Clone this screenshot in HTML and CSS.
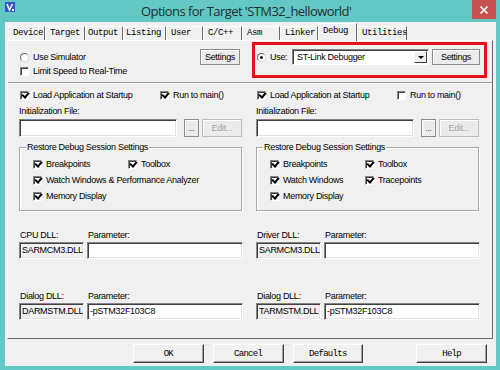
FILE: index.html
```html
<!DOCTYPE html>
<html lang="en">
<head>
    <meta charset="UTF-8">
    <title>Options for Target 'STM32_helloworld'</title>
    <link rel="stylesheet" href="styles.css">
</head>
<body>

<div class="window">
    <div class="titlebar">
        <svg class="app-icon" width="10" height="10" viewBox="0 0 10 10">
            <rect width="10" height="10" fill="#3556c6"/>
            <path d="M2 2 L4.5 8 L7.5 2" stroke="#fff" stroke-width="1.5" fill="none"/>
            <rect x="7" y="7" width="2" height="2" fill="#fff"/>
        </svg>
        <span class="title">Options for Target 'STM32_helloworld'</span>
        <span class="close">
            <svg width="10" height="10" viewBox="0 0 10 10">
                <path d="M1.5 1.5 L8.5 8.5 M8.5 1.5 L1.5 8.5" stroke="#fff" stroke-width="1.7"/>
            </svg>
        </span>
    </div>

    <div class="client">
        <div class="tabs">
            <span class="tab w37">Device</span>
            <span class="tab w40">Target</span>
            <span class="tab w38 tight">Output</span>
            <span class="tab w43 tight">Listing</span>
            <span class="tab w37">User</span>
            <span class="tab w39">C/C++</span>
            <span class="tab w38">Asm</span>
            <span class="tab w38">Linker</span>
            <span class="tab w39 active">Debug</span>
            <span class="tab w50">Utilities</span>
        </div>

        <div class="panel">
            <!-- simulator side -->
            <div class="pane left">
                <div class="top">
                    <div class="row first">
                        <label class="opt"><span class="radio"></span>Use Simulator</label>
                        <button class="btn settings-sim">Settings</button>
                    </div>
                    <div class="row">
                        <label class="opt"><span class="check"></span>Limit Speed to Real-Time</label>
                    </div>
                </div>
                <div class="sep"></div>

                <div class="row load">
                    <label class="opt wide"><span class="check on"></span>Load Application at Startup</label>
                    <label class="opt"><span class="check on"></span>Run to main()</label>
                </div>
                <div class="caption">Initialization File:</div>
                <div class="file-row">
                    <div class="field file"></div>
                    <button class="btn dots">...</button>
                    <button class="btn edit" disabled>Edit...</button>
                </div>

                <div class="group">
                    <span class="legend">Restore Debug Session Settings</span>
                    <div class="group-rows">
                        <div class="grow">
                            <label class="opt col"><span class="check on"></span>Breakpoints</label>
                            <label class="opt"><span class="check on"></span>Toolbox</label>
                        </div>
                        <div class="grow">
                            <label class="opt"><span class="check on"></span>Watch Windows &amp; Performance Analyzer</label>
                        </div>
                        <div class="grow">
                            <label class="opt"><span class="check on"></span>Memory Display</label>
                        </div>
                    </div>
                </div>

                <div class="dll-labels first-dll">
                    <span class="dll-name">CPU DLL:</span>
                    <span>Parameter:</span>
                </div>
                <div class="dll-fields">
                    <div class="field ro dll">SARMCM3.DLL</div>
                    <div class="field param"></div>
                </div>

                <div class="dll-labels second-dll">
                    <span class="dll-name">Dialog DLL:</span>
                    <span>Parameter:</span>
                </div>
                <div class="dll-fields">
                    <div class="field ro dll">DARMSTM.DLL</div>
                    <div class="field param">-pSTM32F103C8</div>
                </div>
            </div>

            <!-- target side -->
            <div class="pane right">
                <div class="top">
                    <div class="highlight">
                        <div class="row first">
                            <label class="opt use"><span class="radio on"></span>Use:</label>
                            <div class="select">
                                <span class="select-text">ST-Link Debugger</span>
                                <span class="drop"><span class="arrow"></span></span>
                            </div>
                            <button class="btn settings-use">Settings</button>
                        </div>
                    </div>
                </div>
                <div class="sep"></div>

                <div class="row load">
                    <label class="opt wide"><span class="check on"></span>Load Application at Startup</label>
                    <label class="opt"><span class="check"></span>Run to main()</label>
                </div>
                <div class="caption">Initialization File:</div>
                <div class="file-row">
                    <div class="field file"></div>
                    <button class="btn dots">...</button>
                    <button class="btn edit" disabled>Edit...</button>
                </div>

                <div class="group">
                    <span class="legend">Restore Debug Session Settings</span>
                    <div class="group-rows">
                        <div class="grow">
                            <label class="opt col"><span class="check on"></span>Breakpoints</label>
                            <label class="opt"><span class="check on"></span>Toolbox</label>
                        </div>
                        <div class="grow">
                            <label class="opt col"><span class="check on"></span>Watch Windows</label>
                            <label class="opt"><span class="check on"></span>Tracepoints</label>
                        </div>
                        <div class="grow">
                            <label class="opt"><span class="check on"></span>Memory Display</label>
                        </div>
                    </div>
                </div>

                <div class="dll-labels first-dll">
                    <span class="dll-name">Driver DLL:</span>
                    <span>Parameter:</span>
                </div>
                <div class="dll-fields">
                    <div class="field ro dll">SARMCM3.DLL</div>
                    <div class="field param"></div>
                </div>

                <div class="dll-labels second-dll">
                    <span class="dll-name">Dialog DLL:</span>
                    <span>Parameter:</span>
                </div>
                <div class="dll-fields">
                    <div class="field ro dll">TARMSTM.DLL</div>
                    <div class="field param">-pSTM32F103C8</div>
                </div>
            </div>
        </div>

        <div class="buttons">
            <button class="dlg-btn">OK</button>
            <button class="dlg-btn">Cancel</button>
            <button class="dlg-btn">Defaults</button>
            <button class="dlg-btn help">Help</button>
        </div>
    </div>
</div>

</body>
</html>
```

FILE: styles.css
```css
* {
    margin: 0;
    padding: 0;
    box-sizing: border-box;
}

body {
    font-family: "Liberation Sans", Arial, sans-serif;
    font-size: 9px;
    letter-spacing: -0.3px;
    color: #000;
    background: #fff;
}

.window {
    width: 500px;
    height: 370px;
    background: #63c7c4;
    display: flex;
    flex-direction: column;
}

/* title bar */
.titlebar {
    height: 22px;
    display: flex;
    align-items: flex-start;
    flex-shrink: 0;
}

.app-icon {
    display: block;
    margin: 2px 0 0 5px;
}

.title {
    margin: 3px 0 0 126px;
    font-family: "Open Sans", "Liberation Sans", sans-serif;
    font-size: 13px;
    letter-spacing: -0.55px;
    line-height: 16px;
    color: #1c3030;
    white-space: nowrap;
}

.close {
    margin-left: auto;
    margin-right: 4px;
    width: 24px;
    height: 19px;
    background: #c75050;
    display: flex;
    align-items: center;
    justify-content: center;
}

/* client area */
.client {
    margin: 0 4px 0 5px;
    height: 344px;
    background: #f0f0f0;
    padding: 4px 0 0 2px;
}

.tabs {
    display: flex;
    align-items: flex-end;
    height: 14px;
    margin-left: 1px;
    font-family: "Liberation Mono", "Courier New", monospace;
    font-size: 9px;
    letter-spacing: -0.4px;
}

.tab {
    height: 14px;
    line-height: 13px;
    padding-left: 4px;
    border-left: 1px solid #fff;
    border-top: 1px solid #fff;
    border-right: 1px solid #6a6a6a;
    white-space: nowrap;
}

.tab.tight { padding-left: 2px; }
.tab.active {
    height: 18px;
    line-height: 15px;
    margin-bottom: -1px;
    background: #f0f0f0;
    position: relative;
    z-index: 1;
}

.w37 { width: 37px; }
.w38 { width: 38px; }
.w39 { width: 39px; }
.w40 { width: 40px; }
.w43 { width: 43px; }
.w50 { width: 50px; }

.panel {
    width: 486px;
    height: 299px;
    border: 1px solid;
    border-color: #fff #696969 #696969 #fff;
    display: flex;
}

.pane {
    display: flex;
    flex-direction: column;
}

.pane.left {
    width: 240px;
    padding-left: 11px;
}

.pane.right {
    width: 244px;
    padding-left: 8px;
}

.top {
    height: 41px;
}

.row {
    display: flex;
    align-items: center;
    height: 12px;
}

.row.first {
    height: 16px;
    margin-top: 8px;
}

.sep {
    height: 2px;
    border-top: 1px solid #a0a0a0;
    border-bottom: 1px solid #fff;
}

.left .sep { margin-left: -11px; }
.right .sep { margin-left: -8px; }

.opt {
    display: flex;
    align-items: center;
    white-space: nowrap;
    line-height: 12px;
}

.opt.wide { width: 140px; }
.opt.col { width: 95px; }
.opt.use { width: 36px; }

.check {
    width: 9px;
    height: 9px;
    margin: 0 4px 0 1px;
    background: #fff;
    border: 1px solid;
    border-color: #808080 #fff #fff #808080;
    box-shadow: inset 1px 1px #404040;
    display: flex;
    align-items: center;
    justify-content: center;
}

.check.on::after {
    content: "";
    width: 3px;
    height: 5px;
    margin: -2px 0 0 1px;
    border: solid #000;
    border-width: 0 2px 2px 0;
    transform: rotate(40deg);
}

.radio {
    width: 9px;
    height: 9px;
    margin: 0 4px 0 1px;
    border-radius: 50%;
    background: #fff;
    border: 1px solid;
    border-color: #6a6a6a #d8d8d8 #d8d8d8 #6a6a6a;
    display: flex;
    align-items: center;
    justify-content: center;
}

.radio.on::after {
    content: "";
    width: 3px;
    height: 3px;
    border-radius: 50%;
    background: #000;
}

.btn {
    font-family: inherit;
    font-size: 9px;
    letter-spacing: -0.3px;
    color: #000;
    height: 16px;
    line-height: 14px;
    background: #ebebeb;
    border: 1px solid #8c8c8c;
    box-shadow: inset 1px 1px #fff;
    text-align: center;
}

.settings-sim {
    width: 40px;
    margin-left: auto;
    margin-right: 8px;
}

.settings-use {
    width: 48px;
    margin-left: 3px;
}

.highlight {
    width: 235px;
    height: 36px;
    margin: 1px 0 0 -4px;
    border: 3px solid #e2131b;
    padding-left: 1px;
}

.highlight .row.first {
    margin-top: 4px;
}

.select {
    width: 137px;
    height: 16px;
    display: flex;
    background: #fff;
    border: 1px solid;
    border-color: #848484 #fff #fff #848484;
    box-shadow: inset 1px 1px #404040;
    padding: 1px 1px 1px 4px;
}

.select-text {
    flex: 1;
    line-height: 13px;
}

.drop {
    width: 13px;
    background: #ececec;
    border: 1px solid;
    border-color: #fff #404040 #404040 #fff;
    display: flex;
    align-items: center;
    justify-content: center;
}

.arrow {
    width: 0;
    height: 0;
    border-left: 3px solid transparent;
    border-right: 3px solid transparent;
    border-top: 3px solid #000;
}

.load {
    margin-top: 5px;
}

.caption {
    margin-top: 4px;
    height: 12px;
    line-height: 12px;
}

.file-row {
    display: flex;
    margin-top: 2px;
    height: 18px;
}

.field {
    height: 17px;
    line-height: 15px;
    padding-left: 2px;
    background: #fff;
    border: 1px solid;
    border-color: #848484 #fff #fff #848484;
    box-shadow: inset 1px 1px #404040, inset -1px -1px #e3e3e3;
    white-space: nowrap;
    overflow: hidden;
}

.field.ro { background: #f0f0f0; }
.field.file { width: 158px; height: 18px; }

.dots {
    width: 15px;
    height: 18px;
    margin-left: 7px;
    color: #555;
}

.edit {
    width: 40px;
    height: 18px;
    margin-left: 3px;
    color: #a4a4a4;
    border-color: #bdbdbd;
}

.group {
    width: 223px;
    height: 64px;
    margin-top: 10px;
    border: 1px solid #a9a9a9;
    box-shadow: inset 1px 1px #fff, 1px 1px #fff;
    padding-left: 12px;
    display: flex;
    flex-direction: column;
}

.legend {
    align-self: flex-start;
    margin: -7px 0 0 -6px;
    padding: 0 1px;
    line-height: 12px;
    background: #f0f0f0;
}

.group-rows {
    margin-top: 3px;
}

.grow {
    display: flex;
    align-items: center;
    height: 16px;
}

.dll-labels {
    display: flex;
    height: 12px;
    line-height: 12px;
}

.first-dll { margin-top: 18px; }
.second-dll { margin-top: 31px; }

.dll-name {
    width: 69px;
    padding-left: 1px;
}

.dll-fields {
    display: flex;
    margin-top: 1px;
}

.dll { width: 65px; }
.param { width: 156px; margin-left: 3px; }

.buttons {
    display: flex;
    margin: 5px 0 0 126px;
}

.dlg-btn {
    width: 72px;
    height: 19px;
    margin-right: 9px;
    font-family: "Liberation Mono", "Courier New", monospace;
    font-size: 9px;
    letter-spacing: -0.7px;
    color: #000;
    background: #f0f0f0;
    border: 1px solid;
    border-color: #fff #404040 #404040 #fff;
    box-shadow: inset -1px -1px #a0a0a0;
}

.dlg-btn.help {
    margin-left: 44px;
}
```
